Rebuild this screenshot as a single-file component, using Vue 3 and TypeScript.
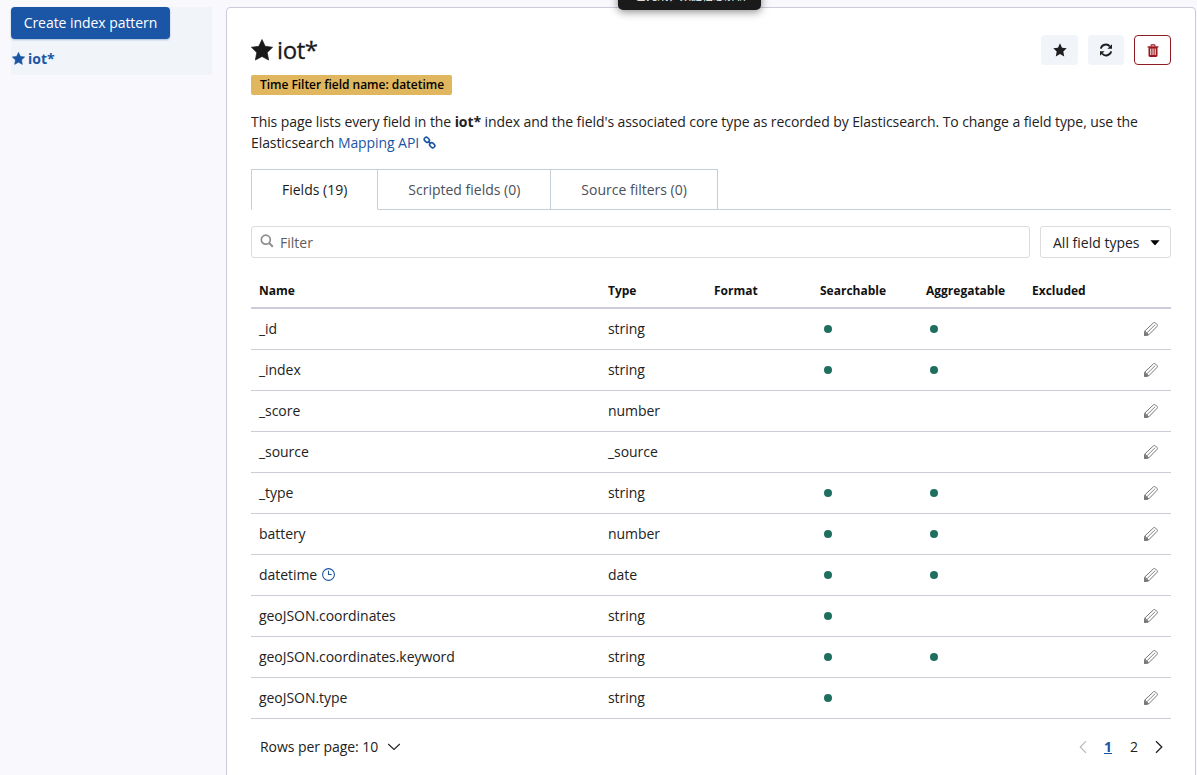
<script setup lang="ts">
interface Field {
  name: string
  type: string
  searchable?: boolean
  aggregatable?: boolean
  time?: boolean
}

const columns = ['Name', 'Type', 'Format', 'Searchable', 'Aggregatable', 'Excluded', '']
const tabs = ['Fields (19)', 'Scripted fields (0)', 'Source filters (0)']

const fields: Field[] = [
  { name: '_id', type: 'string', searchable: true, aggregatable: true },
  { name: '_index', type: 'string', searchable: true, aggregatable: true },
  { name: '_score', type: 'number' },
  { name: '_source', type: '_source' },
  { name: '_type', type: 'string', searchable: true, aggregatable: true },
  { name: 'battery', type: 'number', searchable: true, aggregatable: true },
  { name: 'datetime', type: 'date', searchable: true, aggregatable: true, time: true },
  { name: 'geoJSON.coordinates', type: 'string', searchable: true },
  { name: 'geoJSON.coordinates.keyword', type: 'string', searchable: true, aggregatable: true },
  { name: 'geoJSON.type', type: 'string', searchable: true },
]

const starPath =
  'M8 .4 10.3 5.3 15.7 6 11.8 9.8 12.8 15.3 8 12.7 3.2 15.3 4.2 9.8 .3 6 5.7 5.3Z'
</script>

<template>
  <div class="page">
    <aside class="sidebar">
      <div class="pattern-list">
        <button class="create">Create index pattern</button>
        <a class="pattern">
          <svg width="13" height="13" viewBox="0 0 16 16">
            <path :d="starPath" fill="currentColor" stroke="currentColor" stroke-width=".6" />
          </svg>
          <span>iot*</span>
        </a>
      </div>
    </aside>

    <main class="panel">
      <header class="head">
        <h1>
          <svg width="22" height="22" viewBox="0 0 16 16">
            <path :d="starPath" fill="currentColor" stroke="currentColor" stroke-width=".5" stroke-linejoin="round" />
          </svg>
          <span>iot*</span>
        </h1>
        <div class="actions">
          <button class="action" aria-label="Set as default">
            <svg width="14" height="14" viewBox="0 0 16 16"><path :d="starPath" fill="currentColor" /></svg>
          </button>
          <button class="action narrow" aria-label="Refresh">
            <svg width="14" height="14" viewBox="0 0 14 14">
              <g fill="none" stroke="currentColor" stroke-width="1.9">
                <path d="M1.8 5.6A5.2 5.2 0 0 1 10.9 3.5" />
                <path d="M12.2 8.4A5.2 5.2 0 0 1 3.1 10.5" />
              </g>
              <path d="M13 1.2V5.8H8.4ZM1 12.8V8.2H5.6Z" fill="currentColor" />
            </svg>
          </button>
          <button class="action danger" aria-label="Delete">
            <svg width="12" height="13" viewBox="0 0 12 13">
              <path d="M3.7 2.6 4.4.9H7.6L8.3 2.6" fill="none" stroke="currentColor" stroke-width="1.1" />
              <path d="M.5 2.3H11.5V3.5H.5Z" fill="currentColor" />
              <path
                fill-rule="evenodd"
                d="M1.5 3H10.5V11.6Q10.5 13 9.1 13H2.9Q1.5 13 1.5 11.6ZM3.3 4.6V11H4.3V4.6ZM5.5 4.6V11H6.5V4.6ZM7.7 4.6V11H8.7V4.6Z"
                fill="currentColor"
              />
            </svg>
          </button>
        </div>
      </header>

      <span class="badge">Time Filter field name: datetime</span>

      <p class="intro">
        This page lists every field in the <b>iot*</b> index and the field's associated core type as recorded by
        Elasticsearch. To change a field type, use the Elasticsearch
        <a>Mapping API
          <svg width="13" height="13" viewBox="0 0 13 13" fill="none" stroke="currentColor" stroke-width="1.6">
            <rect x="-2.7" y="-2" width="5.4" height="4" rx="1.8" transform="translate(3.8 3.8) rotate(45)" />
            <rect x="-2.7" y="-2" width="5.4" height="4" rx="1.8" transform="translate(9.2 9.2) rotate(45)" />
            <path d="M5 5 8 8" />
          </svg>
        </a>
      </p>

      <nav class="tabs">
        <button v-for="(tab, i) in tabs" :key="tab" class="tab" :class="{ active: i === 0 }">{{ tab }}</button>
        <span class="tab-rest"></span>
      </nav>

      <div class="filters">
        <div class="search">
          <svg width="14" height="14" viewBox="0 0 14 14" fill="none" stroke="currentColor">
            <circle cx="5.8" cy="5.7" r="4.5" stroke-width="1.7" />
            <path d="M9.1 9 12.8 12.7" stroke-width="2" />
          </svg>
          <span>Filter</span>
        </div>
        <div class="select">
          <span>All field types</span>
          <svg width="10" height="6" viewBox="0 0 10 6"><path d="M.4.3H9.6L5.7 4.8Q5 5.5 4.3 4.8Z" fill="#000" /></svg>
        </div>
      </div>

      <table>
        <colgroup>
          <col class="c-name" />
          <col v-for="n in 5" :key="n" class="c-mid" />
          <col />
        </colgroup>
        <thead>
          <tr>
            <th v-for="column in columns" :key="column">{{ column }}</th>
          </tr>
        </thead>
        <tbody>
          <tr v-for="field in fields" :key="field.name">
            <td>
              <div class="name">
                <span>{{ field.name }}</span>
                <svg v-if="field.time" width="13" height="13" viewBox="0 0 13 13" fill="none" stroke="#1b55a5">
                  <circle cx="6.5" cy="6.5" r="5.9" stroke-width="1.1" />
                  <path d="M6.5 2.8V6.5H9.6" stroke-width="1.1" />
                </svg>
              </div>
            </td>
            <td>{{ field.type }}</td>
            <td></td>
            <td class="flag"><i v-if="field.searchable" class="dot"></i></td>
            <td class="flag"><i v-if="field.aggregatable" class="dot"></i></td>
            <td></td>
            <td class="edit">
              <svg width="16" height="16" viewBox="0 0 16 16" fill="none" stroke="#777" stroke-width="1">
                <path d="M1.9 9.9 10.4 1.9Q11.4 1 12.4 1.9L14 3.5Q14.9 4.4 14 5.4L5.8 13.8 1.5 14.4Z" />
                <path d="M3.8 11.9 12.2 3.7M1.9 9.9 5.8 13.8" stroke-width=".9" />
                <path d="M1.5 14.4V11L5 14Z" fill="#777" />
              </svg>
            </td>
          </tr>
        </tbody>
      </table>

      <footer class="foot">
        <div class="rows">
          <span>Rows per page: 10</span>
          <svg width="14" height="8" viewBox="0 0 14 8" fill="none" stroke="#222" stroke-width="1.1">
            <path d="M1.2 1 7 6.5 12.8 1" />
          </svg>
        </div>
        <div class="pager">
          <svg width="8" height="14" viewBox="0 0 8 14" fill="none" stroke="#b5b5b8" stroke-width="1.1">
            <path d="M7 1.2 1.2 7 7 12.8" />
          </svg>
          <a class="current">1</a>
          <a>2</a>
          <svg width="8" height="14" viewBox="0 0 8 14" fill="none" stroke="#222" stroke-width="1.3">
            <path d="M1 1.2 6.8 7 1 12.8" />
          </svg>
        </div>
      </footer>
    </main>

    <div class="toast">已完成，数据信息解析</div>
  </div>
</template>

<style>
body {
  background: #f8f8fd;
  overflow: hidden;
}
</style>

<style scoped>
* {
  box-sizing: border-box;
}
.page {
  position: relative;
  display: flex;
  align-items: flex-start;
  gap: 14px;
  height: 775px;
  overflow: hidden;
  padding: 7px 1px 0 11px;
  font: 14px/21px 'Open Sans', 'Noto Sans', sans-serif;
  color: #222;
}
button {
  font: inherit;
  padding: 0;
}
svg {
  flex: none;
}
.sidebar {
  width: 201px;
}
.pattern-list {
  height: 68px;
  background: #f1f5fa;
}
.create {
  display: block;
  width: 159px;
  height: 32px;
  padding-bottom: 1px;
  border: 0;
  border-radius: 4px;
  background: #1b55a5;
  color: #fff;
  letter-spacing: -0.05px;
  box-shadow: 0 1px 2px rgba(27, 85, 165, 0.35);
}
.pattern {
  display: flex;
  align-items: center;
  gap: 3px;
  margin-top: 9px;
  padding-left: 1px;
  color: #1b55a5;
  font-weight: 700;
}
.panel {
  width: 970px;
  height: 800px;
  padding: 24px;
  background: #fff;
  border: 1px solid #cbcbdc;
  border-radius: 4px;
}
.head {
  display: flex;
  justify-content: space-between;
  height: 43px;
  padding-top: 3px;
}
h1 {
  display: flex;
  align-items: center;
  gap: 4px;
  height: 29px;
  margin: 0;
  font-size: 24px;
  font-weight: 500;
  letter-spacing: -0.4px;
  color: #1a1a1a;
  -webkit-text-stroke: 0.3px #1a1a1a;
}
.actions {
  display: flex;
  gap: 10px;
}
.action {
  display: flex;
  align-items: center;
  justify-content: center;
  width: 37px;
  height: 30px;
  border: 0;
  border-radius: 4px;
  background: #f1f5fa;
  color: #1e1e1e;
}
.action.narrow {
  width: 36px;
}
.action.danger {
  border: 1px solid #8e1c22;
  background: #fff;
  color: #9c161c;
}
.badge {
  display: block;
  width: 201px;
  height: 20px;
  padding-left: 1px;
  border-radius: 2px;
  background: #e0b65e;
  color: #000;
  font-size: 12px;
  font-weight: 600;
  line-height: 20px;
  letter-spacing: -0.03px;
  text-align: center;
  white-space: nowrap;
}
.intro {
  margin: 16px 0;
  letter-spacing: -0.078px;
}
.intro a {
  color: #1b55a5;
}
.intro svg {
  vertical-align: -1px;
}
.tabs {
  display: flex;
  height: 41px;
}
.tab {
  padding: 0 30px;
  border: 1px solid #c6ced6;
  border-left-width: 0;
  background: #fff;
  color: #4a5058;
}
.tab.active {
  border-left-width: 1px;
  border-bottom-color: #fff;
  color: #1a1a1a;
}
.tab-rest {
  flex: 1;
  border-bottom: 1px solid #c6ced6;
}
.filters {
  display: flex;
  gap: 10px;
  height: 32px;
  margin: 16px 0;
}
.search,
.select {
  display: flex;
  align-items: center;
  border: 1px solid #dcdcdf;
  border-radius: 3px;
}
.search {
  flex: 1;
  gap: 6px;
  padding: 1px 0 0 8px;
  color: #5d5d5d;
}
.search svg {
  margin-top: -4px;
  color: #8d8d8d;
}
.select {
  width: 131px;
  justify-content: space-between;
  padding: 1px 10px 0 12px;
}
table {
  width: 920px;
  table-layout: fixed;
  border-collapse: separate;
  border-spacing: 0;
}
.c-name {
  width: 349px;
}
.c-mid {
  width: 106px;
}
th {
  height: 35px;
  padding: 0 8px;
  border-bottom: 2px solid #cdcdda;
  color: #111;
  font-size: 12px;
  font-weight: 700;
  text-align: left;
}
td {
  height: 41px;
  padding: 0 8px 2px;
  border-bottom: 1px solid #cdcdd6;
  letter-spacing: -0.05px;
  vertical-align: middle;
}
.flag,
.edit {
  padding-bottom: 0;
}
.name {
  display: flex;
  align-items: center;
  gap: 5px;
}
.name svg {
  margin-top: 1px;
}
.dot {
  display: block;
  width: 8px;
  height: 8px;
  margin-left: 4px;
  border-radius: 50%;
  background: #1f6f60;
}
.edit svg {
  display: block;
  margin-left: 5px;
}
.foot {
  display: flex;
  align-items: center;
  justify-content: space-between;
  margin-top: 17px;
  padding: 0 8px 0 9px;
}
.rows,
.pager {
  display: flex;
  align-items: center;
}
.rows {
  gap: 9px;
  letter-spacing: -0.06px;
}
.pager {
  gap: 17px;
}
.pager .current {
  margin-right: 1px;
  color: #1b55a5;
  font-weight: 700;
  text-decoration: underline;
}
.toast {
  position: absolute;
  left: 618px;
  top: -20px;
  width: 143px;
  height: 30px;
  padding-left: 3px;
  border-radius: 5px;
  background: #1a1a1a;
  box-shadow: 0 2px 9px rgba(0, 0, 0, 0.45);
  color: #fff;
  font: 11.2px/31px 'Noto Sans CJK SC', sans-serif;
  text-align: center;
  white-space: nowrap;
}
</style>
